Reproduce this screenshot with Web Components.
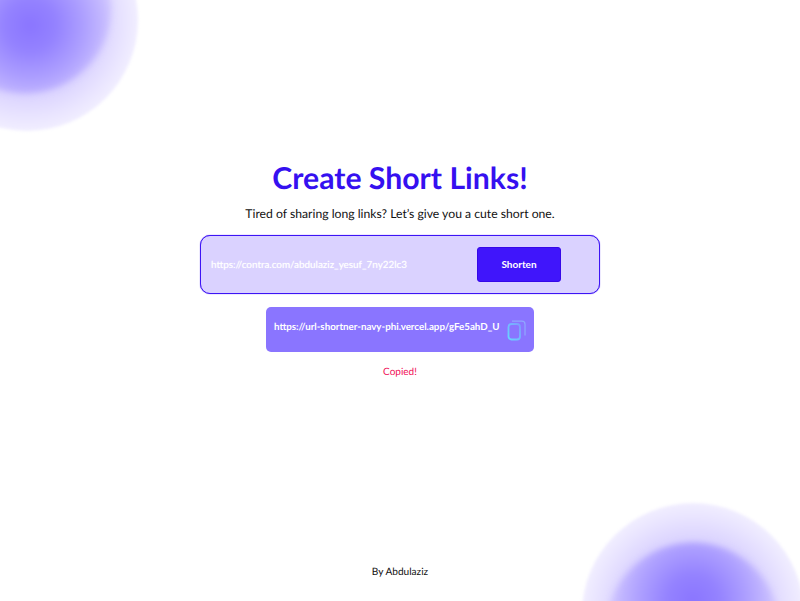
<!DOCTYPE html>
<html>
<head>
<meta charset="utf-8">
<title>Create Short Links!</title>
<style>
html, body { margin: 0; height: 100%; background: #fff; font-family: "Lato", "Liberation Sans", sans-serif; overflow: hidden; text-rendering: geometricPrecision; }
</style>
</head>
<body>
<short-page>
    <glow-blob style="--x:-84px;--y:-91px;--ix:23px;--iy:13px;--gx:53%;--gy:60%"></glow-blob>
    <glow-blob style="--x:582px;--y:503px;--ix:25px;--iy:39px;--gx:50%;--gy:34%"></glow-blob>
    <page-hero
        heading="Create Short Links!"
        text="Tired of sharing long links? Let’s give you a cute short one."></page-hero>
    <shorten-form value="https://contra.com/abdulaziz_yesuf_7ny22lc3"></shorten-form>
    <short-result url="https://url-shortner-navy-phi.vercel.app/gFe5ahD_U" message="Copied!"></short-result>
    <page-footer slot="footer">By Abdulaziz</page-footer>
</short-page>

<script>
class ShortPage extends HTMLElement {
    constructor() {
        super();
        this.attachShadow({mode: 'open'}).innerHTML = `
        <style>
            :host {
                display: flex;
                flex-direction: column;
                align-items: center;
                position: relative;
                box-sizing: border-box;
                width: 800px;
                height: 601px;
                padding-top: 159px;
                overflow: hidden;
                color: #000;
            }
            footer { margin-top: auto; padding-bottom: 22px; }
        </style>
        <slot></slot>
        <footer><slot name="footer"></slot></footer>
        `;
    }
}

class GlowBlob extends HTMLElement {
    constructor() {
        super();
        this.attachShadow({mode: 'open'}).innerHTML = `
        <style>
            :host {
                position: absolute;
                left: var(--x);
                top: var(--y);
                width: 222px;
                height: 222px;
            }
            .outer {
                position: absolute;
                inset: 0;
                border-radius: 50%;
                background: radial-gradient(circle closest-side, #ded7ff 0, #ded7ff 72%, #e8e3ff 86%, #f1eeff 100%);
                filter: blur(1.5px);
            }
            .inner {
                position: absolute;
                left: var(--ix);
                top: var(--iy);
                width: 172px;
                height: 172px;
                border-radius: 50%;
                background: radial-gradient(circle 92px at var(--gx) var(--gy), #8a75ff 0, #9482ff 28%, #ad9fff 58%, #c6bbff 82%, #ded7ff 100%);
                filter: blur(3px);
            }
        </style>
        <div class="outer"></div>
        <div class="inner"></div>
        `;
    }
}

class PageHero extends HTMLElement {
    constructor() {
        super();
        this.attachShadow({mode: 'open'}).innerHTML = `
        <style>
            :host { display: block; text-align: center; position: relative; }
            h1 {
                margin: 0;
                font-size: 30.2px;
                line-height: 38px;
                font-weight: 700;
                color: #3510f0;
            }
            p {
                margin: 8px 0 0;
                font-size: 12.2px;
                line-height: 17px;
                color: #111;
            }
        </style>
        <h1>${this.getAttribute('heading')}</h1>
        <p>${this.getAttribute('text')}</p>
        `;
    }
}

class ShortenForm extends HTMLElement {
    constructor() {
        super();
        this.attachShadow({mode: 'open'}).innerHTML = `
        <style>
            :host {
                display: flex;
                align-items: center;
                justify-content: space-between;
                position: relative;
                box-sizing: border-box;
                width: 400px;
                height: 59px;
                margin-top: 13px;
                padding: 0 38px 0 10px;
                background: #dad2ff;
                border: 1px solid #3d14f5;
                box-shadow: 0 0 1px #4a20f0;
                border-radius: 10px;
            }
            span { font-size: 9.9px; color: #fff; text-shadow: 0 0 1px rgba(255, 255, 255, .7); }
            button {
                width: 84px;
                height: 35px;
                margin-top: -1px;
                border: 1px solid #3608e8;
                border-radius: 3px;
                background: #4015fb;
                color: #fff;
                font: 700 10px "Lato", "Liberation Sans", sans-serif;
            }
        </style>
        <span>${this.getAttribute('value')}</span>
        <button>Shorten</button>
        `;
    }
}

class ShortResult extends HTMLElement {
    constructor() {
        super();
        this.attachShadow({mode: 'open'}).innerHTML = `
        <style>
            :host { display: flex; flex-direction: column; align-items: center; position: relative; }
            .box {
                display: flex;
                align-items: center;
                justify-content: space-between;
                box-sizing: border-box;
                width: 268px;
                height: 45px;
                margin-top: 13px;
                padding: 0 7px 0 8px;
                background: #8a75ff;
                border-radius: 5px;
                color: #fff;
                font-size: 9.75px;
                font-weight: 700;
            }
            .box span { white-space: nowrap; margin-top: -5px; }
            svg { display: block; flex: none; margin-top: 2px; }
            .msg { margin-top: 14px; font-size: 10px; line-height: 13px; color: #f01058; }
        </style>
        <div class="box">
            <span>${this.getAttribute('url')}</span>
            <svg width="20" height="24" viewBox="0 0 20 24" fill="none">
                <defs>
                    <linearGradient id="front" x1="0" y1="1" x2="1" y2="0">
                        <stop offset="0" stop-color="#66d8ff"/>
                        <stop offset="1" stop-color="#7f9dff"/>
                    </linearGradient>
                </defs>
                <path d="M5 2.2H15a3 3 0 0 1 3 3V16.5" stroke="#8fa8ff" stroke-width="1.2"/>
                <rect x="1.5" y="5" width="11.5" height="15.5" rx="3" stroke="url(#front)" stroke-width="1.8"/>
            </svg>
        </div>
        <div class="msg">${this.getAttribute('message')}</div>
        `;
    }
}

class PageFooter extends HTMLElement {
    constructor() {
        super();
        this.attachShadow({mode: 'open'}).innerHTML = `
        <style>
            :host { display: block; font-size: 10.1px; line-height: 13px; color: #111; }
        </style>
        <slot></slot>
        `;
    }
}

customElements.define('short-page', ShortPage);
customElements.define('glow-blob', GlowBlob);
customElements.define('page-hero', PageHero);
customElements.define('shorten-form', ShortenForm);
customElements.define('short-result', ShortResult);
customElements.define('page-footer', PageFooter);
</script>
</body>
</html>
